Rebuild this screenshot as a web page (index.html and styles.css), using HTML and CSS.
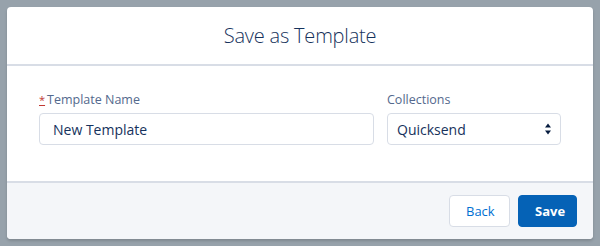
FILE: index.html
```html
<!DOCTYPE html>
<html lang="en">
<head>
    <meta charset="UTF-8">
    <title>Save as Template</title>
    <link rel="stylesheet" href="styles.css">
</head>
<body>
    <div class="modal">
        <div class="modal-header">
            <h2>Save as Template</h2>
        </div>
        <div class="modal-body">
            <div class="field field-name">
                <label><abbr title="required">*</abbr>Template Name</label>
                <div class="input">New Template</div>
            </div>
            <div class="field field-collection">
                <label>Collections</label>
                <div class="select">
                    <span>Quicksend</span>
                    <svg width="8" height="14" viewBox="0 0 8 14">
                        <path d="M4 1.5 L7 5.5 H1 Z" fill="#061c3f"/>
                        <path d="M4 12.5 L7 8.5 H1 Z" fill="#061c3f"/>
                    </svg>
                </div>
            </div>
        </div>
        <div class="modal-footer">
            <button class="btn btn-neutral">Back</button>
            <button class="btn btn-brand">Save</button>
        </div>
    </div>
</body>
</html>
```

FILE: styles.css
```css
body {
    font-family: 'Open Sans', 'Liberation Sans', sans-serif;
    background-color: #97a2ab;
    color: #16325c;
    margin: 0;
    padding: 7px;
}

.modal {
    width: 586px;
    background-color: #ffffff;
    border-radius: 4px;
    overflow: hidden;
    box-shadow: 0 2px 3px rgba(0, 0, 0, 0.16);
}

.modal-header {
    height: 57px;
    display: flex;
    align-items: center;
    justify-content: center;
    border-bottom: 2px solid #d8dde6;
}

.modal-header h2 {
    margin: 0;
    font-size: 20px;
    font-weight: 300;
    color: #16325c;
    letter-spacing: -0.2px;
}

.modal-body {
    display: flex;
    gap: 13px;
    padding: 25px 32px 36px 32px;
}

.field label {
    display: block;
    font-size: 12.5px;
    color: #54698d;
    margin-bottom: 4px;
    line-height: 18px;
}

.field abbr {
    color: #c23934;
    font-size: 11px;
    text-decoration: underline;
    margin-right: 2px;
}

.field-name {
    width: 335px;
}

.field-collection {
    width: 174px;
}

.input, .select {
    height: 30px;
    border: 1px solid #d8dde6;
    border-radius: 4px;
    font-size: 14px;
    color: #16325c;
    display: flex;
    align-items: center;
    padding: 0 13px;
}

.select {
    justify-content: space-between;
    padding: 0 8px 0 9px;
}

.modal-footer {
    height: 56px;
    background-color: #f4f6f9;
    border-top: 2px solid #d8dde6;
    display: flex;
    align-items: center;
    justify-content: flex-end;
    gap: 8px;
    padding: 0 16px;
}

.btn {
    height: 32px;
    padding: 0 16px;
    border-radius: 4px;
    font-family: inherit;
    font-size: 13px;
    cursor: pointer;
}

.btn-neutral {
    width: 61px;
    background-color: #ffffff;
    border: 1px solid #d8dde6;
    color: #0070d2;
}

.btn-brand {
    width: 59px;
    background-color: #0562b6;
    border: 1px solid #0562b6;
    color: #ffffff;
    font-weight: 700;
}
```
